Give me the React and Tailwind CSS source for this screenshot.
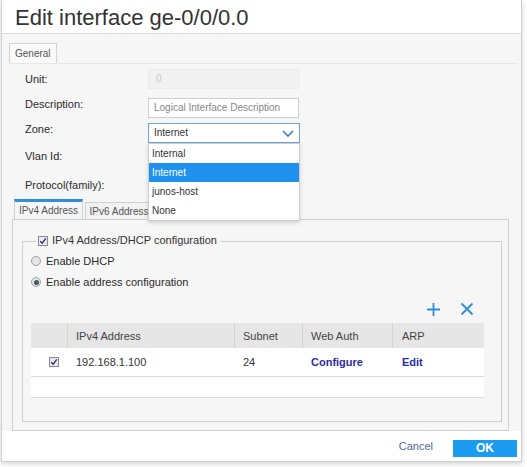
import React from 'react';

const FONT = { fontFamily: '"Liberation Sans", Arial, sans-serif' };

const ZONES = ['Internal', 'Internet', 'junos-host', 'None'];

function Check() {
  return (
    <span className="inline-flex w-[10px] h-[10px] border border-[#8a8a8a] bg-[#e8e8f4] items-center justify-center">
      <svg width="8" height="8" viewBox="0 0 8 8">
        <path d="M1.2 4.2 L3.2 6.2 L6.8 1.4" fill="none" stroke="#2b2b6b" strokeWidth="1.3" />
      </svg>
    </span>
  );
}

function Radio({ on }) {
  return (
    <span className="inline-flex w-[10px] h-[10px] rounded-full border border-[#a0a0a0] bg-[#e4e4e4] items-center justify-center">
      {on && <span className="w-[5px] h-[5px] rounded-full bg-[#3d5a6e]" />}
    </span>
  );
}

function Row({ label, top, children }) {
  return (
    <div className="flex items-center h-[25px]" style={{ marginTop: top }}>
      <div className="w-[123px] text-[11px] text-[#2a2a2a]">{label}</div>
      {children}
    </div>
  );
}

export default function App() {
  return (
    <div className="w-[527px] h-[467px] bg-white relative overflow-hidden" style={FONT}>
      <div className="ml-[1px] w-[521px] h-[462px] border border-t-0 border-[#cfcfcf] bg-white shadow-[0_2px_5px_rgba(0,0,0,0.18)] flex flex-col">
        {/* title */}
        <div className="h-[35px] border-b border-[#d9d9d9] pl-[13px] flex items-center">
          <h1 className="text-[22px] leading-none text-[#333] pt-[2px]">Edit interface ge-0/0/0.0</h1>
        </div>

        {/* body */}
        <div className="flex-1 bg-[#f6f6f6] pt-[9px] pl-[7px] pr-[3px] relative">
          <div className="flex">
            <div className="h-[20px] px-[5px] flex items-center border border-b-0 border-[#d4d4d4] bg-[#fafafa] text-[10px] text-[#555]">General</div>
          </div>
          <div className="border-t border-[#e6e6e6] pl-[16px] pt-[2px]">
            <Row label="Unit:" top={0}>
              <div className="w-[151px] h-[20px] bg-[#f1f1f1] border border-[#ececec] text-[10px] text-[#c8c8c8] pl-[7px] flex items-center">0</div>
            </Row>
            <Row label="Description:" top={0}>
              <div className="mt-[8px] w-[151px] h-[20px] bg-white border border-[#cfcfcf] text-[10px] text-[#888] pl-[5px] flex items-center">Logical Interface Description</div>
            </Row>
            <Row label="Zone:" top={0}>
              <div className="mt-[8px] relative w-[152px] h-[20px] bg-white border border-[#6fa6d6] text-[10px] text-[#333] pl-[5px] flex items-center">
                Internet
                <svg className="absolute right-[5px] top-[4px]" width="12" height="10" viewBox="0 0 12 10">
                  <path d="M1 3 L6 8 L11 3" fill="none" stroke="#3a7fc0" strokeWidth="1.6" />
                </svg>
                <div className="absolute left-[-1px] top-[19px] w-[152px] bg-white border border-[#cfcfcf] shadow-[0_2px_4px_rgba(0,0,0,0.15)] z-10">
                  {ZONES.map((z) => (
                    <div
                      key={z}
                      className={`h-[19px] pl-[3px] flex items-center text-[10px] ${z === 'Internet' ? 'bg-[#1e90ee] text-white' : 'text-[#333]'}`}
                    >
                      {z}
                    </div>
                  ))}
                </div>
              </div>
            </Row>
            <Row label="Vlan Id:" top={2} />
            <Row label="Protocol(family):" top={4} />
          </div>

          {/* address family tabs */}
          <div className="ml-[5px] mt-[2px] flex items-end h-[20px]">
            <div className="h-[20px] w-[69px] border-t-[3px] border-t-[#2f8fd6] border-x border-[#cfcfcf] bg-[#f6f6f6] text-[10px] text-[#555] flex items-center justify-center">IPv4 Address</div>
            <div className="h-[17px] w-[68px] ml-[2px] border border-b-0 border-[#cfcfcf] bg-[#f2f2f2] text-[10px] text-[#555] flex items-center justify-center">IPv6 Address</div>
          </div>
          <div className="ml-[3px] mr-[9px] h-[212px] border border-[#cfcfcf] bg-[#f6f6f6] pt-[21px] pl-[9px] pr-[6px]">
            <div className="relative h-[181px] border border-[#cfcfcf]">
              <div className="absolute left-[13px] top-[-7px] bg-[#f6f6f6] pr-[4px] pl-[2px] flex items-center gap-[4px] text-[11px] text-[#333] leading-none">
                <Check />
                <span>IPv4 Address/DHCP configuration</span>
              </div>

              <div className="pt-[12px] pl-[8px] text-[11px] text-[#2a2a2a]">
                <div className="flex items-center gap-[5px] h-[14px]">
                  <Radio />
                  <span>Enable DHCP</span>
                </div>
                <div className="flex items-center gap-[5px] h-[14px] mt-[7px]">
                  <Radio on />
                  <span>Enable address configuration</span>
                </div>
              </div>

              <div className="flex justify-end gap-[19px] pr-[27px] mt-[11px] h-[18px] items-center">
                <svg width="15" height="15" viewBox="0 0 15 15">
                  <path d="M7.5 1 V14 M1 7.5 H14" stroke="#2f8fd6" strokeWidth="1.8" />
                </svg>
                <svg width="14" height="14" viewBox="0 0 14 14">
                  <path d="M1.5 1.5 L12.5 12.5 M12.5 1.5 L1.5 12.5" stroke="#2f8fd6" strokeWidth="1.8" />
                </svg>
              </div>

              <div className="ml-[8px] mr-[17px] mt-[5px] text-[11px]">
                <div className="flex h-[25px] bg-[#e6e6e6] text-[#444] items-center">
                  <div className="w-[37px] h-full border-r border-[#d4d4d4]" />
                  <div className="w-[167px] h-full pl-[8px] border-r border-[#d4d4d4] flex items-center">IPv4 Address</div>
                  <div className="w-[68px] h-full pl-[8px] border-r border-[#d4d4d4] flex items-center">Subnet</div>
                  <div className="w-[90px] h-full pl-[8px] border-r border-[#d4d4d4] flex items-center">Web Auth</div>
                  <div className="flex-1 h-full pl-[9px] flex items-center">ARP</div>
                </div>
                <div className="flex h-[29px] bg-white items-center border-b border-[#dcdcdc] text-[#333]">
                  <div className="w-[37px] flex justify-center pl-[8px]"><Check /></div>
                  <div className="w-[167px] pl-[8px]">192.168.1.100</div>
                  <div className="w-[68px] pl-[8px]">24</div>
                  <div className="w-[90px] pl-[8px] font-bold text-[#2d2ca3]">Configure</div>
                  <div className="flex-1 pl-[9px] font-bold text-[#2d2ca3]">Edit</div>
                </div>
                <div className="h-[21px] bg-white border-b border-[#dcdcdc]" />
              </div>
            </div>
          </div>
        </div>

        {/* footer */}
        <div className="h-[30px] bg-white flex items-center justify-end pr-[4px]">
          <span className="text-[11px] text-[#5467a0] mr-[20px]">Cancel</span>
          <button className="mt-[4px] w-[64px] h-[17px] bg-[#1b9cf0] text-white text-[12px] font-bold leading-none">OK</button>
        </div>
      </div>
    </div>
  );
}
